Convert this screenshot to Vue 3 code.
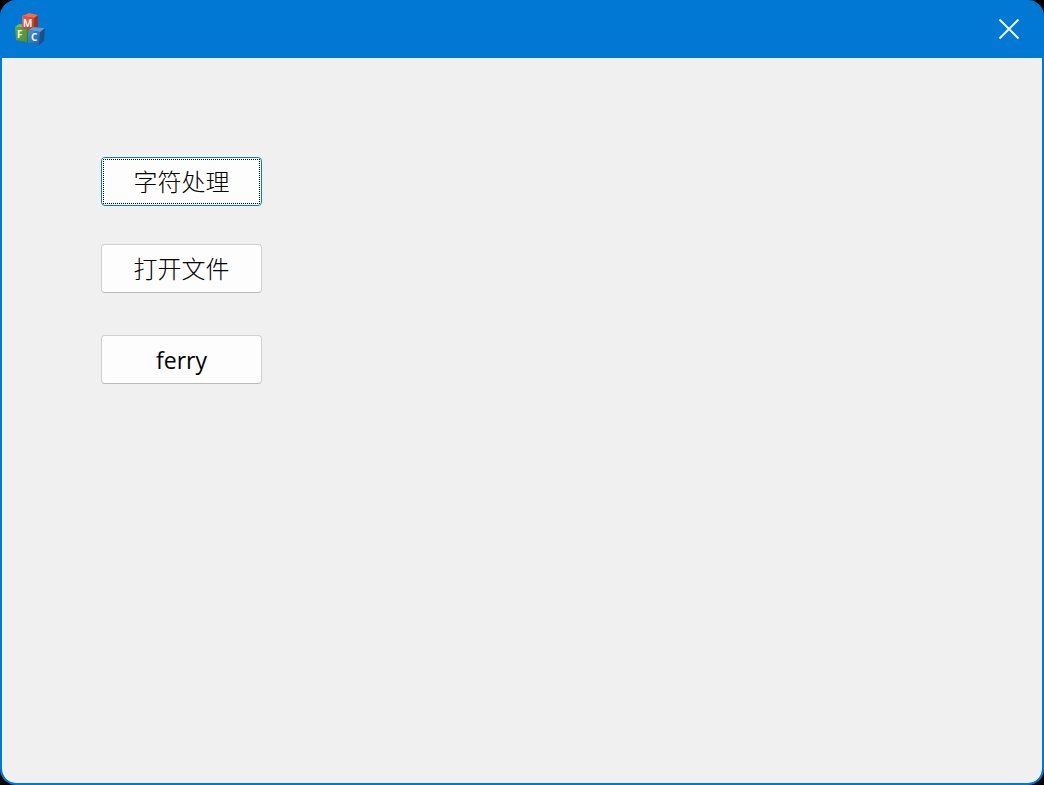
<script setup>
import { ref } from 'vue'

const focused = ref(0)
const actions = ['字符处理', '打开文件', 'ferry']
</script>

<template>
  <main class="desktop">
    <section class="window" aria-label="MFC">
      <header class="titlebar">
        <svg class="logo" viewBox="0 0 34 34" role="img" aria-label="MFC">
          <defs>
            <linearGradient id="red" x1="0" y1="0" x2="1" y2="1">
              <stop offset="0" stop-color="#e2644c" />
              <stop offset="1" stop-color="#b83a28" />
            </linearGradient>
            <linearGradient id="green" x1="0" y1="0" x2="1" y2="1">
              <stop offset="0" stop-color="#62a552" />
              <stop offset="1" stop-color="#4f9426" />
            </linearGradient>
            <linearGradient id="blue" x1="0" y1="0" x2="1" y2="1">
              <stop offset="0" stop-color="#4a92cf" />
              <stop offset="1" stop-color="#1d62a8" />
            </linearGradient>
          </defs>
          <path d="M2 15l4-3 11 1v14l-3 3-11-2z" fill="#3d7a2c" />
          <path d="M2 15l4-3 11 1-3 3z" fill="#7db573" />
          <path d="M2 15l12 1v14l-11-2z" fill="url(#green)" />
          <path d="M9 4l7-3 9 2v12l-4 4-12-3z" fill="#9c3026" />
          <path d="M9 4l7-3 9 2-4 3z" fill="#e8705a" />
          <path d="M9 4l12 2v13l-12-3z" fill="url(#red)" />
          <path d="M15 18l5-3 12 1-1 13-5 4-11-2z" fill="#1a4f88" />
          <path d="M15 18l5-3 12 1-5 4z" fill="#5b9fd6" />
          <path d="M15 18l12 2-1 13-11-2z" fill="url(#blue)" />
          <text x="10" y="15">M</text>
          <text x="4" y="26">F</text>
          <text x="18" y="29">C</text>
        </svg>
        <button class="close" type="button" aria-label="关闭">
          <svg viewBox="0 0 22 22" aria-hidden="true">
            <path d="M1.5 1.5L20.5 20.5M20.5 1.5L1.5 20.5" />
          </svg>
        </button>
      </header>
      <div class="content">
        <button
          v-for="(label, index) in actions"
          :key="label"
          type="button"
          class="action"
          :class="{ focused: focused === index }"
          @click="focused = index"
        >{{ label }}</button>
      </div>
    </section>
  </main>
</template>

<style>
body {
  background: #000;
}
</style>

<style scoped>
.desktop {
  display: flex;
  min-height: 100vh;
  background: #000;
}
.window {
  flex: 1;
  display: flex;
  flex-direction: column;
  box-sizing: border-box;
  border: 2px solid #0078d4;
  border-top: 0;
  border-radius: 16px;
  background: #0078d4;
  overflow: hidden;
}
.titlebar {
  display: flex;
  align-items: center;
  justify-content: space-between;
  height: 58px;
  padding: 0 12px 0 11px;
}
.logo {
  width: 34px;
  height: 34px;
}
.logo text {
  font: bold 10px "Open Sans", sans-serif;
  fill: #f4f4f4;
}
.close {
  display: flex;
  padding: 10px;
  border: 0;
  background: none;
}
.close svg {
  width: 22px;
  height: 22px;
  fill: none;
  stroke: #e8f6ff;
  stroke-width: 2;
}
.content {
  flex: 1;
  display: flex;
  flex-direction: column;
  align-items: flex-start;
  gap: 38px;
  padding: 99px;
  border-radius: 0 0 14px 14px;
  background: #f0f0f0;
}
.action {
  position: relative;
  box-sizing: border-box;
  width: 161px;
  height: 49px;
  padding: 0;
  border: 1px solid #d0d0d0;
  border-bottom-color: #bababa;
  border-radius: 4px;
  background: #fdfdfd;
  color: #000;
  font-family: "Open Sans", "Noto Sans CJK SC", sans-serif;
  font-size: 24px;
  font-weight: 300;
  line-height: 32px;
  outline: none;
}
.action:last-child {
  margin-top: 4px;
  font-size: 23px;
  font-weight: 400;
}
.action.focused {
  border-color: #0083b8;
}
.focused::after {
  content: "";
  position: absolute;
  inset: 1px;
  border: 1px dotted #000;
}
</style>
